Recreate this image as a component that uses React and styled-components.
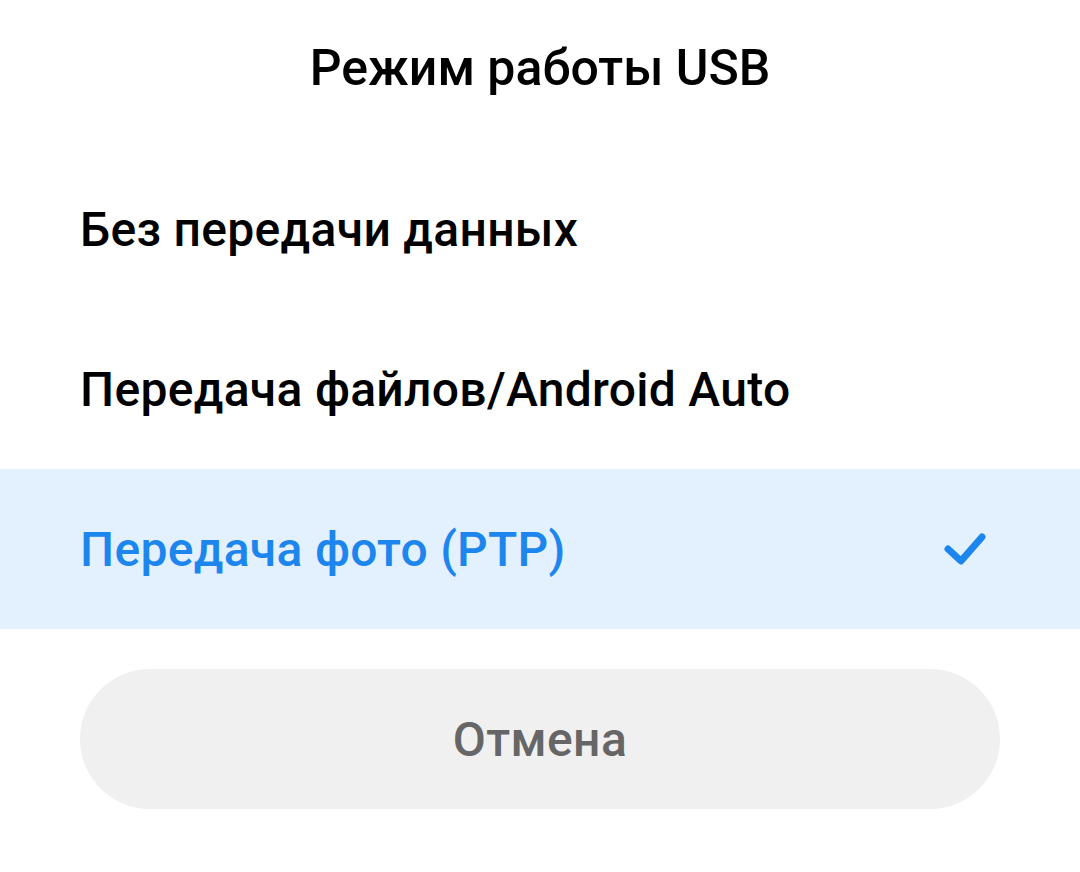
import React from "react";
import styled, { createGlobalStyle } from "styled-components";

const GlobalStyle = createGlobalStyle`
  html, body {
    margin: 0;
    padding: 0;
    background: #ffffff;
  }
  body {
    font-family: Roboto, "Noto Sans", "Liberation Sans", sans-serif;
    -webkit-font-smoothing: antialiased;
  }
`;

const Sheet = styled.div`
  width: 1080px;
  height: 872px;
  background: #ffffff;
  display: flex;
  flex-direction: column;
  overflow: hidden;
`;

const Title = styled.h1`
  margin: 0;
  height: 149px;
  padding-top: 38px;
  box-sizing: border-box;
  text-align: center;
  font-size: 50px;
  line-height: 60px;
  font-weight: 500;
  color: #000000;
`;

const OptionList = styled.div`
  display: flex;
  flex-direction: column;
`;

const Option = styled.div`
  height: 160px;
  padding: 0 80px;
  display: flex;
  align-items: center;
  justify-content: space-between;
  background: ${(p) => (p.selected ? "#e3f0fd" : "transparent")};
  color: ${(p) => (p.selected ? "#1d86ee" : "#000000")};
  font-size: 48px;
  letter-spacing: 0.3px;
  font-weight: 500;
`;

const Check = styled.svg`
  width: 48px;
  height: 38px;
  margin-right: 11px;
`;

const CancelButton = styled.button`
  margin: 40px 80px 0;
  height: 140px;
  border: none;
  border-radius: 70px;
  background: #f0f0f0;
  color: #666666;
  font-family: inherit;
  font-size: 48px;
  letter-spacing: 0.4px;
  font-weight: 500;
`;

const options = [
  { id: "none", label: "Без передачи данных" },
  { id: "mtp", label: "Передача файлов/Android Auto" },
  { id: "ptp", label: "Передача фото (PTP)", selected: true },
];

const App = () => {
  return (
    <>
      <GlobalStyle />
      <Sheet>
        <Title>Режим работы USB</Title>
        <OptionList>
          {options.map((opt) => (
            <Option key={opt.id} selected={opt.selected}>
              <span>{opt.label}</span>
              {opt.selected && (
                <Check viewBox="0 0 48 38">
                  <path
                    d="M7 19 L20 31 L41 7"
                    fill="none"
                    stroke="#1d86ee"
                    strokeWidth="7"
                    strokeLinecap="round"
                    strokeLinejoin="round"
                  />
                </Check>
              )}
            </Option>
          ))}
        </OptionList>
        <CancelButton>Отмена</CancelButton>
      </Sheet>
    </>
  );
};

export default App;
